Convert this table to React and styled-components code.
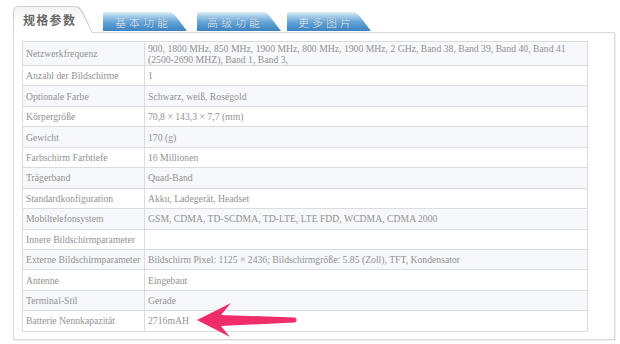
import React from "react";
import styled, { createGlobalStyle } from "styled-components";

const Global = createGlobalStyle`
  html, body { margin: 0; padding: 0; background: #fff; }
  body { font-family: "Liberation Serif", "Times New Roman", serif; }
`;

const Page = styled.div`
  position: relative;
  width: 620px;
  height: 344px;
  padding: 6px 0 0 13px;
  box-sizing: border-box;
`;

const TabBar = styled.div`
  display: flex;
  align-items: flex-end;
  gap: 10px;
  height: 26px;
`;

const ActiveTab = styled.div`
  position: relative;
  z-index: 1;
  width: 80px;
  height: 27px;
  margin-bottom: -1px;
  box-sizing: border-box;
  padding-left: 10px;
  display: flex;
  align-items: center;
  background: #cfcfcf;
  clip-path: polygon(0 5px, 1px 2px, 4px 0, 62px 0, 66px 1px, 69px 4px, 80px 27px, 0 27px);
  &::before {
    content: "";
    position: absolute;
    left: 1px;
    top: 1px;
    right: 1px;
    bottom: 0;
    background: linear-gradient(#f2f2f2, #ffffff 60%);
    clip-path: polygon(0 4px, 1px 1px, 3px 0, 61px 0, 64px 1px, 67px 4px, 78px 26px, 0 26px);
  }
`;

const ActiveLabel = styled.span`
  position: relative;
  font-family: "Noto Sans CJK SC", sans-serif;
  font-weight: 700;
  font-size: 12px;
  letter-spacing: 1.3px;
  color: #6a6a6a;
`;

const Tab = styled.div`
  width: 84px;
  height: 19px;
  margin-bottom: 1px;
  box-sizing: border-box;
  padding-left: ${(p) => p.$pad || 12}px;
  display: flex;
  align-items: center;
  font-family: "Noto Sans CJK SC", sans-serif;
  font-size: 11px;
  letter-spacing: 3px;
  color: #c9dcec;
  text-shadow: 0 0 1px rgba(40, 90, 140, 0.6);
  background: linear-gradient(#dcebf6 0%, #a6cdea 22%, #6aa8d9 50%, #4b90ca 80%, #4283bf 100%);
  clip-path: polygon(0 1px, 1px 0, 67px 0, 71px 2px, 84px 19px, 0 19px);
  margin-left: ${(p) => p.$ml || 0}px;
`;

const Panel = styled.div`
  width: 602px;
  height: 308px;
  box-sizing: border-box;
  border: 1px solid #dadada;
  box-shadow: 1px 1px 0 #f0f0f0;
  padding: 8px 0 0 8px;
  background: #fff;
`;

const Table = styled.table`
  width: 566px;
  border-collapse: collapse;
  table-layout: fixed;
  font-family: "Liberation Serif", "Times New Roman", serif;
  font-size: 9.7px;
  color: #929292;
`;

const Row = styled.tr`
  background: ${(p) => (p.$odd ? "#f6f8fc" : "#ffffff")};
`;

const Cell = styled.td`
  border: 1px solid #dcdcdc;
  padding: 0 3px;
  height: ${(p) => (p.$tall ? "23px" : "19.45px")};
  line-height: 11px;
  vertical-align: middle;
  white-space: nowrap;
`;

const Arrow = styled.svg`
  position: absolute;
  left: 0;
  top: 0;
  pointer-events: none;
`;

const rows = [
  ["Netzwerkfrequenz", null],
  ["Anzahl der Bildschirme", "1"],
  ["Optionale Farbe", "Schwarz, weiß, Roségold"],
  ["Körpergröße", "70,8 × 143,3 × 7,7 (mm)"],
  ["Gewicht", "170 (g)"],
  ["Farbschirm Farbtiefe", "16 Millionen"],
  ["Trägerband", "Quad-Band"],
  ["Standardkonfiguration", "Akku, Ladegerät, Headset"],
  ["Mobiltelefonsystem", "GSM, CDMA, TD-SCDMA, TD-LTE, LTE FDD, WCDMA, CDMA 2000"],
  ["Innere Bildschirmparameter", ""],
  ["Externe Bildschirmparameter", "Bildschirm Pixel: 1125 × 2436; Bildschirmgröße: 5.85 (Zoll), TFT, Kondensator"],
  ["Antenne", "Eingebaut"],
  ["Terminal-Stil", "Gerade"],
  ["Batterie Nennkapazität", "2716mAH"],
];

export default function App() {
  return (
    <>
      <Global />
      <Page>
        <TabBar>
          <ActiveTab>
            <ActiveLabel>规格参数</ActiveLabel>
          </ActiveTab>
          <Tab>基本功能</Tab>
          <Tab $pad={10}>高级功能</Tab>
          <Tab $pad={11} $ml={-4}>更多图片</Tab>
        </TabBar>
        <Panel>
          <Table>
            <colgroup>
              <col style={{ width: "122px" }} />
              <col />
            </colgroup>
            <tbody>
              {rows.map(([label, value], i) => (
                <Row key={label} $odd={i % 2 === 0}>
                  <Cell $tall={i === 0}>{label}</Cell>
                  <Cell $tall={i === 0}>
                    {value === null ? (
                      <>
                        900, 1800 MHz, 850 MHz, 1900 MHz, 800 MHz, 1900 MHz, 2 GHz, Band 38, Band 39, Band 40, Band 41
                        <br />
                        (2500-2690 MHZ), Band 1, Band 3,
                      </>
                    ) : (
                      value
                    )}
                  </Cell>
                </Row>
              ))}
            </tbody>
          </Table>
        </Panel>
        <Arrow width="620" height="344" viewBox="0 0 620 344">
          <path
            d="M197,320 L231,303 Q225,310 221,315 L295,317.5 Q298.5,320 295,322.5 L221,326 Q225,331 230,337 Z"
            fill="#ee2d6a"
          />
        </Arrow>
      </Page>
    </>
  );
}
